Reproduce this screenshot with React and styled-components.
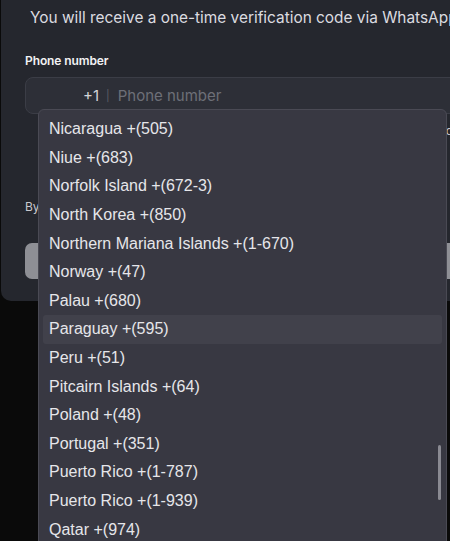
import React from 'react'
import styled, { createGlobalStyle } from 'styled-components'

const GlobalStyle = createGlobalStyle`
  html, body {
    margin: 0;
    padding: 0;
    background: #0a0a0a;
    overflow: hidden;
  }
  body {
    width: 450px;
    height: 541px;
  }
`

const countries = [
  'Nicaragua +(505)',
  'Niue +(683)',
  'Norfolk Island +(672-3)',
  'North Korea +(850)',
  'Northern Mariana Islands +(1-670)',
  'Norway +(47)',
  'Palau +(680)',
  'Paraguay +(595)',
  'Peru +(51)',
  'Pitcairn Islands +(64)',
  'Poland +(48)',
  'Portugal +(351)',
  'Puerto Rico +(1-787)',
  'Puerto Rico +(1-939)',
  'Qatar +(974)',
]

function App() {
  return (
    <Page>
      <GlobalStyle />
      <Modal>
        <Intro>You will receive a one-time verification code via WhatsApp</Intro>
        <Label>Phone number</Label>
        <Field>
          <Prefix>+1</Prefix>
          <Divider>|</Divider>
          <Placeholder>Phone number</Placeholder>
        </Field>
        <HintRow>
          <span>d</span>
        </HintRow>
        <Terms>
          <TermsLine>By continuing you agree to our Terms of Service and to</TermsLine>
          <TermsLine $indent>our Privacy Policy and we'll message you here</TermsLine>
        </Terms>
        <SubmitButton />
      </Modal>

      <Menu>
        {countries.map((c) => (
          <Option key={c} $active={c === 'Paraguay +(595)'}>
            {c}
          </Option>
        ))}
        <Scrollbar />
      </Menu>
    </Page>
  )
}

export default App

const Page = styled.div`
  position: relative;
  width: 450px;
  height: 541px;
  overflow: hidden;
  background: #0a0a0a;
`

const Modal = styled.div`
  margin-left: 1px;
  width: 500px;
  height: 301px;
  box-sizing: border-box;
  background: #25272e;
  border-bottom-left-radius: 10px;
  padding: 7px 0 0 24px;
  font-family: Inter, "Noto Sans", sans-serif;
  display: flex;
  flex-direction: column;
`

const Intro = styled.div`
  padding-left: 5px;
  font-size: 15.4px;
  line-height: 22px;
  color: #dcdce0;
  white-space: nowrap;
`

const Label = styled.div`
  margin-top: 24px;
  font-size: 12px;
  font-weight: 600;
  line-height: 16px;
  color: #f2f2f4;
  letter-spacing: -0.1px;
`

const Field = styled.div`
  margin-top: 8px;
  height: 37px;
  box-sizing: border-box;
  border: 1px solid #3b3d46;
  border-radius: 8px;
  background: #2d2f37;
  display: flex;
  align-items: center;
  padding-left: 57px;
  font-size: 15px;
`

const Prefix = styled.span`
  color: #d4d4d8;
`

const Divider = styled.span`
  margin: 0 8px 0 7px;
  font-size: 11px;
  color: #5c5e66;
`

const Placeholder = styled.span`
  color: #6d6f78;
`

const HintRow = styled.div`
  margin-top: 9px;
  width: 428px;
  display: flex;
  justify-content: flex-end;
  font-size: 12px;
  line-height: 16px;
  color: #c9c9ce;
`

const Terms = styled.div`
  margin-top: 59px;
  width: 470px;
  font-size: 12px;
  line-height: 17px;
  color: #c9c9ce;
`

const TermsLine = styled.div`
  white-space: nowrap;
  padding-left: ${(p) => (p.$indent ? '30px' : '0')};
`

const SubmitButton = styled.div`
  margin-top: 11px;
  height: 36px;
  border-radius: 7px;
  background: #8e8f95;
`

const Menu = styled.div`
  position: absolute;
  left: 38px;
  top: 109px;
  width: 409px;
  height: 460px;
  box-sizing: border-box;
  padding: 5px 4px 4px;
  background: #383842;
  border: 1px solid #4a4a54;
  border-radius: 6px;
  font-family: "Liberation Sans", Arial, sans-serif;
`

const Option = styled.div`
  height: 28.6px;
  display: flex;
  align-items: center;
  padding-left: 6px;
  border-radius: 3px;
  font-size: 16px;
  color: #e6e6ea;
  background: ${(p) => (p.$active ? '#41414b' : 'transparent')};
`

const Scrollbar = styled.div`
  position: absolute;
  right: 5px;
  top: 335px;
  width: 3px;
  height: 55px;
  border-radius: 2px;
  background: #8a8a92;
`
